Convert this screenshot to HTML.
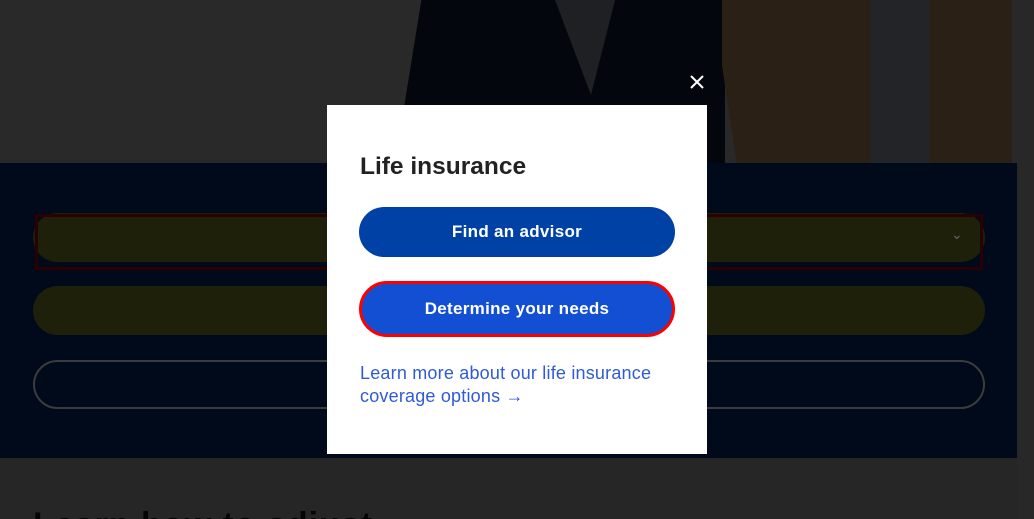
<!DOCTYPE html>
<html><head><meta charset="utf-8"><style>
*{margin:0;padding:0;box-sizing:border-box}
html,body{width:1034px;height:519px;overflow:hidden;background:#262626;font-family:"Liberation Sans",sans-serif;position:relative}
.abs{position:absolute}
</style></head><body>
<div class="abs" style="left:0;top:0;width:1017px;height:163px;background:#292929"></div>
<div class="abs" style="left:395px;top:0;width:330px;height:163px;background:#03060d;clip-path:polygon(8% 0,100% 0,100% 100%,0 100%)"></div>
<div class="abs" style="left:555px;top:0;width:60px;height:95px;background:#1f2023;clip-path:polygon(0 0,100% 0,60% 100%)"></div>
<div class="abs" style="left:722px;top:0;width:290px;height:163px;background:#2a2016;clip-path:polygon(0 0,100% 0,100% 100%,5% 100%,0 40%)"></div>
<div class="abs" style="left:870px;top:0;width:60px;height:163px;background:#232427"></div>
<div class="abs" style="left:1017px;top:0;width:17px;height:519px;background:#282828"></div>
<div class="abs" style="left:0;top:163px;width:1017px;height:295px;background:#000a1a"></div>
<div class="abs" style="left:33px;top:213px;width:952px;height:49px;border-radius:25px;background:#1f200a"></div>
<div class="abs" style="left:35px;top:214px;width:948px;height:56px;border:3px solid #2a0000"></div>
<div class="abs" style="left:951px;top:226px;color:#666;font-size:14px">&#8964;</div>
<div class="abs" style="left:33px;top:286px;width:952px;height:49px;border-radius:25px;background:#1f200a"></div>
<div class="abs" style="left:33px;top:360px;width:952px;height:49px;border-radius:25px;border:2px solid #3c3c3c"></div>
<div class="abs" style="left:33px;top:505px;width:500px;height:14px;overflow:hidden"><div style="font-size:34px;line-height:40px;font-weight:bold;color:#050505;letter-spacing:1px;margin-top:0">Learn how to adjust</div></div>
<svg class="abs" style="left:690px;top:75px" width="14" height="14"><path d="M1 1L13 13M13 1L1 13" stroke="#fff" stroke-width="2"/></svg>
<div class="abs" style="left:327px;top:105px;width:380px;height:349px;background:#fff"></div>
<div class="abs" style="left:360px;top:153px;font-size:24.5px;font-weight:bold;color:#222">Life insurance</div>
<div class="abs" style="left:359px;top:207px;width:316px;height:50px;border-radius:25px;background:#0041a6;color:#fff;font-weight:bold;font-size:17px;text-align:center;line-height:50px;letter-spacing:.3px">Find an advisor</div>
<div class="abs" style="left:359px;top:281px;width:316px;height:56px;border-radius:28px;background:#124fd2;border:3px solid #f00;color:#fff;font-weight:bold;font-size:17px;text-align:center;line-height:50px;letter-spacing:.3px">Determine your needs</div>
<div class="abs" style="left:360px;top:362px;font-size:18px;color:#2f5bd6;line-height:23px;letter-spacing:.2px;width:340px">Learn more about our life insurance<br>coverage options &rarr;</div>
</body></html>
